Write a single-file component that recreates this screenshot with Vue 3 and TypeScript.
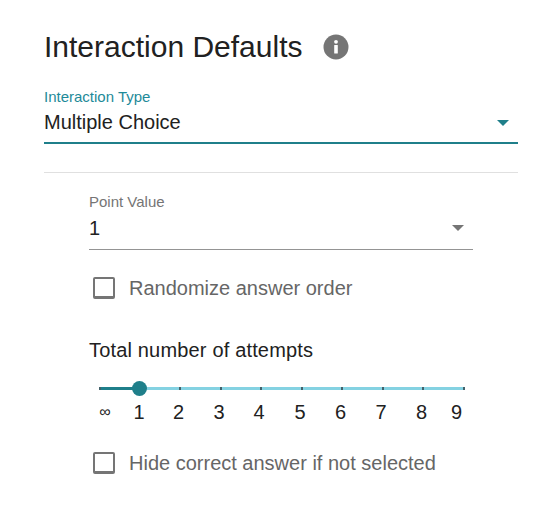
<script setup lang="ts">
const tickStep = 40.5
const ticks = Array.from({ length: 10 }, (_, i) => Math.max(0, i * tickStep - 1))
const labels = [
  { text: '∞', left: 6 },
  { text: '1', left: 40 },
  { text: '2', left: 79.5 },
  { text: '3', left: 120 },
  { text: '4', left: 160 },
  { text: '5', left: 201 },
  { text: '6', left: 241.5 },
  { text: '7', left: 282 },
  { text: '8', left: 322.5 },
  { text: '9', left: 357.5 },
]
</script>

<template>
  <div class="panel">
    <div class="heading">
      <h2>Interaction Defaults</h2>
      <svg class="info" width="26" height="26" viewBox="0 0 26 26">
        <circle cx="13" cy="13" r="12.5" fill="#757575" />
        <rect x="11.2" y="11" width="3.6" height="8.5" rx="0.5" fill="#fff" />
        <circle cx="13" cy="7.8" r="1.9" fill="#fff" />
      </svg>
    </div>

    <div class="select primary">
      <label>Interaction Type</label>
      <div class="value">
        <span>Multiple Choice</span>
        <i class="arrow"></i>
      </div>
    </div>

    <hr />

    <div class="nested">
      <div class="select">
        <label>Point Value</label>
        <div class="value">
          <span>1</span>
          <i class="arrow"></i>
        </div>
      </div>

      <div class="check first">
        <span class="box"></span>
        <span>Randomize answer order</span>
      </div>

      <div class="attempts-title">Total number of attempts</div>

      <div class="slider">
        <div class="track">
          <div class="fill"></div>
          <span v-for="t in ticks" :key="t" class="tick" :style="{ left: `${t}px` }"></span>
          <span class="thumb"></span>
        </div>
        <div class="marks">
          <span v-for="m in labels" :key="m.text" class="mark" :class="{ inf: m.text === '∞' }" :style="{ left: `${m.left}px` }">{{ m.text }}</span>
        </div>
      </div>

      <div class="check">
        <span class="box"></span>
        <span>Hide correct answer if not selected</span>
      </div>
    </div>
  </div>
</template>

<style scoped>
.panel {
  box-sizing: border-box;
  width: 557px;
  height: 507px;
  padding: 29px 39px 0 44px;
  background: #fff;
  font-family: "Liberation Sans", Arial, sans-serif;
  color: #212121;
}

.heading {
  display: flex;
  align-items: center;
  height: 36px;
}

.heading h2 {
  margin: 0;
  font-size: 30px;
  font-weight: 400;
  line-height: 36px;
}

.info {
  margin-left: 21px;
}

.select label {
  display: block;
  font-size: 15px;
  line-height: 16px;
  color: #757575;
}

.select .value {
  display: flex;
  align-items: center;
  justify-content: space-between;
  height: 36px;
  padding-right: 9px;
  padding-bottom: 3px;
  font-size: 20px;
  border-bottom: 1px solid #949494;
}

.arrow {
  width: 0;
  height: 0;
  border-left: 6.5px solid transparent;
  border-right: 6.5px solid transparent;
  border-top: 6.5px solid #757575;
}

.select.primary {
  margin-top: 24px;
}

.select.primary label {
  color: #1e8a99;
}

.select.primary .value {
  height: 35px;
  padding-bottom: 2px;
  border-bottom: 2px solid #1f7f8a;
}

.select.primary .arrow {
  border-top-color: #1f7f8a;
}

hr {
  margin: 28px 0 0;
  border: 0;
  border-top: 1px solid #e0e0e0;
}

.nested {
  width: 384px;
  margin: 21px 0 0 45px;
}

.check {
  display: flex;
  align-items: center;
  gap: 14px;
  margin-top: 21px;
  padding-left: 4px;
  font-size: 20px;
  line-height: 24px;
  color: #666;
}

.box {
  box-sizing: border-box;
  width: 22px;
  height: 22px;
  border: 2px solid #757575;
  border-bottom-width: 3px;
  border-radius: 2px;
}

.check.first {
  margin-top: 26px;
}

.attempts-title {
  margin-top: 38px;
  font-size: 20px;
  line-height: 24px;
  letter-spacing: 0.17px;
}

.slider {
  margin-top: 25px;
}

.track {
  position: relative;
  width: 365px;
  height: 3px;
  margin-left: 10px;
  background: #84d2e2;
}

.fill {
  width: 40px;
  height: 100%;
  background: #1f7f8a;
}

.tick {
  position: absolute;
  top: 0;
  width: 2px;
  height: 3px;
  background: #43626b;
}

.thumb {
  position: absolute;
  top: -6px;
  left: 33px;
  width: 15px;
  height: 15px;
  border-radius: 50%;
  background: #1f7f8a;
}

.marks {
  position: relative;
  height: 24px;
  margin-top: 10px;
  font-size: 20px;
  line-height: 24px;
}

.mark {
  position: absolute;
  top: 0;
  width: 40px;
  margin-left: -10px;
  text-align: center;
}

.mark.inf {
  font-size: 16px;
}

.slider + .check {
  margin-top: 27px;
}
</style>
